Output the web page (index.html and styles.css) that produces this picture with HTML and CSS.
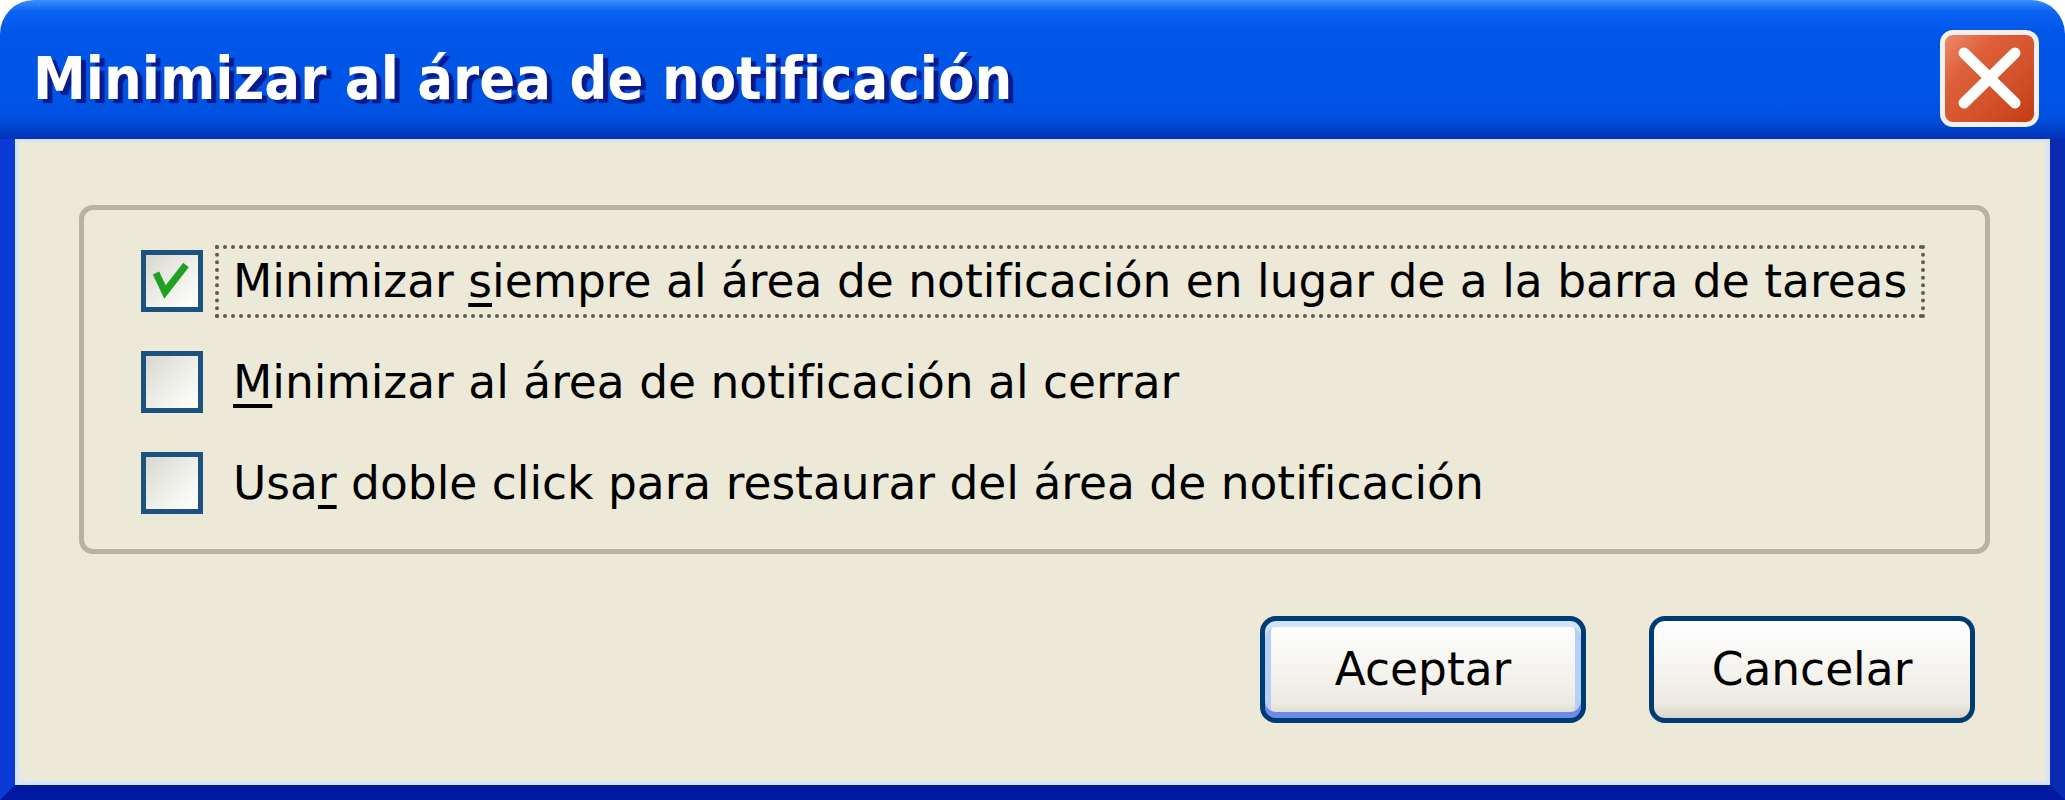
FILE: index.html
```html
<!DOCTYPE html>
<html lang="es">
<head>
  <meta charset="UTF-8">
  <title>Minimizar al área de notificación</title>
  <link rel="stylesheet" href="styles.css">
</head>
<body>
  <div class="window">
    <div class="titlebar">
      <span class="title">Minimizar al área de notificación</span>
      <button class="close" title="Cerrar">
        <svg width="89" height="87" viewBox="0 0 89 87">
          <path d="M19 18 L70 68 M70 18 L19 68" stroke="#fff" stroke-width="11" stroke-linecap="round"/>
        </svg>
      </button>
    </div>

    <div class="client">
      <div class="group">
        <label class="option">
          <span class="box">
            <svg width="52" height="52" viewBox="0 0 52 52">
              <path d="M10 18 L19 37 L40 10" fill="none" stroke="#21a121" stroke-width="7"/>
            </svg>
          </span>
          <span class="text focus">Minimizar <u>s</u>iempre al área de notificación en lugar de a la barra de tareas</span>
        </label>
        <label class="option">
          <span class="box"></span>
          <span class="text"><u>M</u>inimizar al área de notificación al cerrar</span>
        </label>
        <label class="option">
          <span class="box"></span>
          <span class="text">Usa<u>r</u> doble click para restaurar del área de notificación</span>
        </label>
      </div>

      <div class="actions">
        <button class="btn default">Aceptar</button>
        <button class="btn">Cancelar</button>
      </div>
    </div>
  </div>
</body>
</html>
```

FILE: styles.css
```css
body {
  margin: 0;
  background: #fff;
  font-family: "DejaVu Sans", Tahoma, sans-serif;
}

.window {
  width: 2065px;
  height: 800px;
  display: flex;
  flex-direction: column;
}

/* blue caption bar */
.titlebar {
  height: 139px;
  box-sizing: border-box;
  display: flex;
  align-items: center;
  justify-content: space-between;
  padding: 18px 26px 0 33px;
  border-radius: 34px 34px 0 0;
  background: linear-gradient(#3a8ffc 0, #0c63f2 8%, #0056e8 22%, #0055e6 70%, #0050e0 84%, #003fc8 94%, #0533b8 100%);
}

.title {
  color: #fff;
  font-family: "DejaVu Sans Condensed", "DejaVu Sans", sans-serif;
  font-stretch: condensed;
  font-weight: bold;
  font-size: 59px;
  text-shadow: 5px 4px 1px #0a1a8a;
  white-space: nowrap;
}

.close {
  width: 99px;
  height: 97px;
  padding: 0;
  border: 5px solid #f4f0f0;
  border-radius: 13px;
  background: linear-gradient(135deg, #ec8b6c 0, #dd6039 30%, #d2512a 65%, #c43c10 100%);
  display: flex;
  align-items: center;
  justify-content: center;
}

.client {
  flex: 1;
  background: #ece9d8;
  border: 15px solid #0a3bd8;
  border-top: none;
  border-right-color: #0a2ab0;
  border-bottom-color: #0019a0;
  box-shadow: inset 4px 0 #d5e4fa, inset -4px 0 #d5e4fa, inset 0 -4px #d5e4fa, inset 0 3px #d5e4fa;
  padding: 66px 60px 0 64px;
}

/* group box */
.group {
  border: 5px solid #b5b3a1;
  border-radius: 14px;
  padding: 40px 0 35px 57px;
  display: flex;
  flex-direction: column;
  gap: 39px;
}

.option {
  height: 62px;
  display: flex;
  align-items: center;
  gap: 12px;
  font-size: 45.5px;
  color: #000;
}

.box {
  width: 62px;
  height: 62px;
  box-sizing: border-box;
  flex-shrink: 0;
  border: 5px solid #1c5180;
  background: linear-gradient(135deg, #d8d8d0 0, #f0f0ea 55%, #fff 100%);
}

.box svg {
  display: block;
}

.text {
  line-height: 65px;
  padding: 0 14px;
  border: 4px dotted transparent;
  white-space: nowrap;
}

.text.focus {
  border-color: #5c5b55;
}

u {
  text-decoration-thickness: 4px;
  text-underline-offset: 6px;
}

.actions {
  display: flex;
  justify-content: flex-end;
  gap: 63px;
  margin-top: 62px;
  padding-right: 15px;
}

.btn {
  width: 326px;
  height: 107px;
  border: 5px solid #003c74;
  border-radius: 16px;
  font-family: "DejaVu Sans", Tahoma, sans-serif;
  font-size: 45.5px;
  color: #000;
  background: linear-gradient(#ffffff 0, #f7f6f2 40%, #eceae2 85%, #d9d4c8 100%);
}

.btn.default {
  box-shadow: inset 0 6px #cde4fe, inset 0 -6px #6d8ae8, inset 6px 0 #b6cff6, inset -6px 0 #b6cff6;
}
```
